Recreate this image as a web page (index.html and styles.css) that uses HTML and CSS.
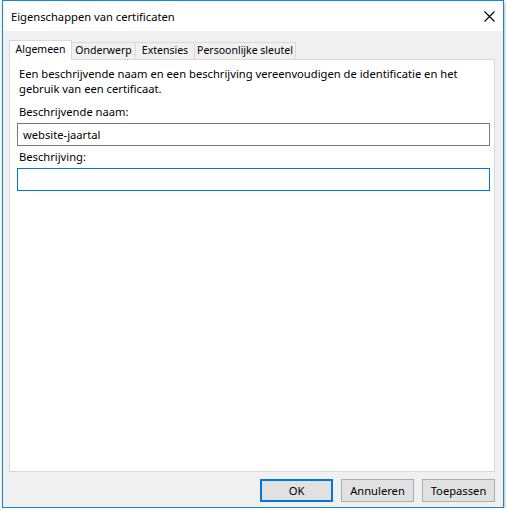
FILE: index.html
```html
<!DOCTYPE html>
<html lang="nl">
<head>
    <meta charset="UTF-8">
    <title>Eigenschappen van certificaten</title>
    <link rel="stylesheet" href="styles.css">
</head>
<body>
<div class="window">
    <div class="titlebar">
        <span class="title">Eigenschappen van certificaten</span>
        <span class="close">
            <svg width="11" height="11" viewBox="0 0 11 11"><path d="M0.5 0.5 L10.5 10.5 M10.5 0.5 L0.5 10.5" stroke="#000" stroke-width="1.1" fill="none"/></svg>
        </span>
    </div>
    <div class="content">
        <div class="tabs">
            <div class="tab active tab-general">Algemeen</div>
            <div class="tab tab-subject">Onderwerp</div>
            <div class="tab tab-ext">Extensies</div>
            <div class="tab tab-key">Persoonlijke sleutel</div>
        </div>
        <div class="panel">
            <p class="intro">Een beschrijvende naam en een beschrijving vereenvoudigen de identificatie en het gebruik van een certificaat.</p>
            <label class="field-label" for="friendly">Beschrijvende naam:</label>
            <input class="field" type="text" id="friendly" value="website-jaartal">
            <label class="field-label" for="descr">Beschrijving:</label>
            <input class="field focused" type="text" id="descr" value="">
        </div>
        <div class="footer">
            <button class="btn default">OK</button>
            <button class="btn">Annuleren</button>
            <button class="btn">Toepassen</button>
        </div>
    </div>
</div>
</body>
</html>
```

FILE: styles.css
```css
* {
    box-sizing: border-box;
}

body {
    margin: 0;
    background: #fff;
    font-family: "Noto Sans", sans-serif;
    font-size: 11.2px;
    color: #000;
}

.window {
    margin-left: 2px;
    width: 502px;
    height: 508px;
    border: 1px solid #1883d7;
    background: #f0f0f0;
    display: flex;
    flex-direction: column;
    box-shadow: 1px 2px 4px rgba(0, 0, 0, 0.3);
}

.titlebar {
    height: 30px;
    background: #fff;
    display: flex;
    align-items: center;
    justify-content: space-between;
    padding: 0 8px 0 8px;
}

.close {
    display: flex;
    padding-top: 1px;
}

.content {
    flex: 1;
    display: flex;
    flex-direction: column;
    padding: 9px 8px 0 6px;
}

.tabs {
    display: flex;
    align-items: flex-end;
    height: 19px;
}

.tab {
    height: 17px;
    line-height: 15px;
    font-size: 10.5px;
    text-align: center;
    white-space: nowrap;
    border: 1px solid #d9d9d9;
    border-bottom: none;
    margin-left: -1px;
    background: #f0f0f0;
}

.tab.active {
    height: 20px;
    line-height: 17px;
    margin-left: 0;
    margin-bottom: -1px;
    background: #fff;
    position: relative;
    z-index: 1;
}

.tab.active + .tab {
    margin-left: 0;
    border-left: none;
}

.tab-general { width: 63px; }
.tab-subject { width: 64px; }
.tab-ext { width: 60px; }
.tab-key { width: 102px; }

.panel {
    flex: 1;
    background: #fff;
    border: 1px solid #d9d9d9;
    padding: 6px 4px 0 7px;
    display: flex;
    flex-direction: column;
}

.intro {
    margin: 0 0 8px 2px;
    line-height: 15px;
}

.field-label {
    margin-left: 2px;
    line-height: 15px;
    margin-bottom: 4px;
}

.field {
    height: 23px;
    border: 1px solid #7a7a7a;
    padding: 0 5px;
    font-family: inherit;
    font-size: inherit;
    color: #000;
    margin-bottom: 3px;
    outline: none;
}

.field.focused {
    border-color: #0078d7;
}

.footer {
    height: 35px;
    display: flex;
    justify-content: flex-end;
    align-items: flex-start;
    padding: 7px 0 0 0;
    gap: 8px;
}

.btn {
    width: 73px;
    height: 23px;
    background: #e1e1e1;
    border: 1px solid #adadad;
    font-family: inherit;
    font-size: inherit;
    color: #000;
    padding: 0;
}

.btn.default {
    border: 2px solid #0078d7;
}
```
